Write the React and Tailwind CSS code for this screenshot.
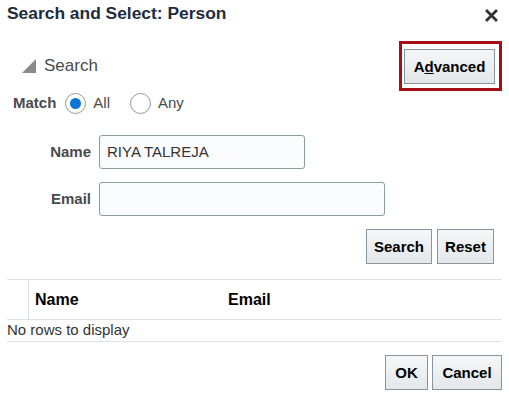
import React from "react";

const btn =
  "h-[35px] border border-[#8795a0] bg-gradient-to-b from-[#f5f7f8] to-[#e3e7ea] text-[15px] font-bold text-black leading-none flex items-center justify-center";

function Radio({ checked, label }) {
  return (
    <div className="flex items-center gap-[7px]">
      <span className="w-[21px] h-[21px] rounded-full border border-[#8e969c] bg-white flex items-center justify-center">
        {checked && <span className="w-[11px] h-[11px] rounded-full bg-[#0b74d6]" />}
      </span>
      <span className="text-[15px] text-[#4a4a4a]">{label}</span>
    </div>
  );
}

export default function App() {
  return (
    <div
      className="w-[509px] h-[396px] bg-white overflow-hidden"
      style={{ fontFamily: '"Liberation Sans", Arial, sans-serif' }}
    >
      {/* Header */}
      <div className="h-[40px] flex justify-between px-[7px] pt-[3px]">
        <div className="text-[17.4px] leading-[20px] font-bold text-[#1d2c3c]">
          Search and Select: Person
        </div>
        <svg width="13" height="13" viewBox="0 0 13 13" className="mt-[6px] mr-[4px]">
          <path d="M2 2 L11 11 M11 2 L2 11" stroke="#333" strokeWidth="2.8" strokeLinecap="square" />
        </svg>
      </div>

      {/* Search header + Advanced */}
      <div className="h-[51px] flex items-center justify-between pl-[22px] pr-[7px]">
        <div className="flex items-center gap-[8px]">
          <svg width="14" height="14" viewBox="0 0 14 14">
            <polygon points="14,0 14,14 0,14" fill="#8a8a8a" />
          </svg>
          <span className="text-[17px] text-[#4a4a4a] leading-none">Search</span>
        </div>
        <div className="border-[3px] border-[#a50e16] pl-[2px] pr-[4px] pt-[5px] pb-[4px]">
          <button className={btn + " w-[91px]"}>
            A<span className="underline">d</span>vanced
          </button>
        </div>
      </div>

      {/* Match row */}
      <div className="h-[24px] flex items-center pl-[13px] gap-[9px]">
        <span className="text-[15px] font-bold text-[#4a4a4a]">Match</span>
        <div className="flex items-center gap-[20px]">
          <Radio checked label="All" />
          <Radio label="Any" />
        </div>
      </div>

      {/* Name */}
      <div className="mt-[20px] flex items-center gap-[8px]">
        <div className="w-[91px] text-right text-[15px] font-bold text-[#4a4a4a]">Name</div>
        <div className="w-[206px] h-[34px] border border-[#8c9aa4] rounded-[3px] bg-[#fbfcfd] flex items-center pl-[7px] text-[15px] text-[#333]">
          RIYA TALREJA
        </div>
      </div>

      {/* Email */}
      <div className="mt-[13px] flex items-center gap-[8px]">
        <div className="w-[91px] text-right text-[15px] font-bold text-[#4a4a4a]">Email</div>
        <div className="w-[286px] h-[34px] border border-[#8c9aa4] rounded-[3px] bg-[#fbfcfd]" />
      </div>

      {/* Search / Reset */}
      <div className="mt-[13px] flex justify-end gap-[5px] pr-[15px]">
        <button className={btn + " w-[66px]"}>Search</button>
        <button className={btn + " w-[57px]"}>Reset</button>
      </div>

      {/* Table */}
      <div className="mt-[15px] mx-[7px]">
        <div className="h-[41px] border-t border-b border-[#dde1e4] flex">
          <div className="w-[22px] border-r border-[#dde1e4]" />
          <div className="w-[199px] pl-[6px] flex items-center text-[16px] font-bold text-black">Name</div>
          <div className="flex items-center text-[16px] font-bold text-black">Email</div>
        </div>
        <div className="h-[22px] border-b border-[#dde1e4] flex items-center text-[15px] text-[#333]">
          No rows to display
        </div>
      </div>

      {/* OK / Cancel */}
      <div className="mt-[13px] flex justify-end gap-[4px] pr-[7px]">
        <button className={btn + " w-[43px]"}>OK</button>
        <button className={btn + " w-[70px]"}>Cancel</button>
      </div>
    </div>
  );
}
